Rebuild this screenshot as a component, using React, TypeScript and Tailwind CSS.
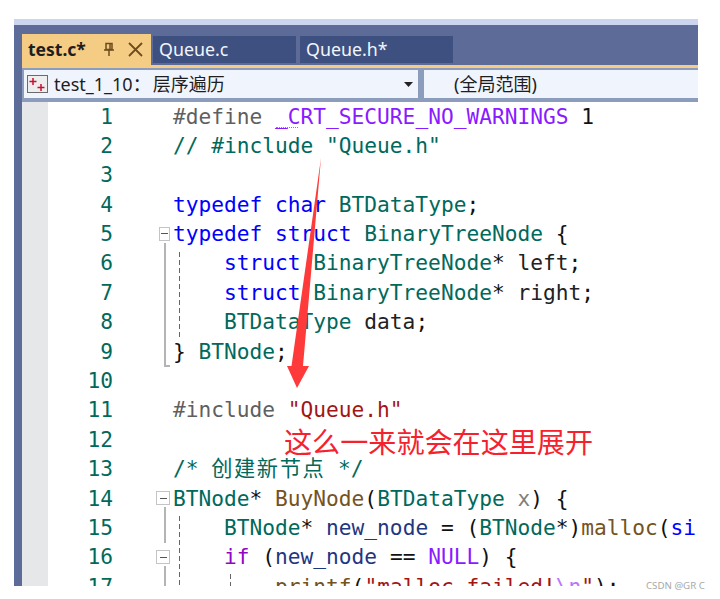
const mono = "font-['DejaVu_Sans_Mono','Noto_Sans_CJK_SC',monospace] text-[21.2px] leading-[29.4px] whitespace-pre";

const kw = "text-[#0000ff]";
const type = "text-[#00695c]";
const pre = "text-[#5f5f5f]";
const macro = "text-[#8a1bff]";
const str = "text-[#a31515]";
const fn = "text-[#74531f]";
const local = "text-[#1f377f]";
const param = "text-[#808080]";
const ctl = "text-[#8f08c4]";

type Seg = [string, string?];

const lines: { segs: Seg[]; fold?: "small" | "big" }[] = [
  { segs: [["#define ", pre], ["_CRT_SECURE_NO_WARNINGS", macro], [" 1"]] },
  { segs: [['// #include "Queue.h"', type]] },
  { segs: [] },
  { segs: [["typedef char", kw], [" BTDataType", type], [";"]] },
  { fold: "small", segs: [["typedef struct", kw], [" BinaryTreeNode", type], [" {"]] },
  { segs: [["    struct", kw], [" BinaryTreeNode", type], ["* "], ["left", "text-[#222222]"], [";"]] },
  { segs: [["    struct", kw], [" BinaryTreeNode", type], ["* "], ["right", "text-[#222222]"], [";"]] },
  { segs: [["    BTDataType", type], [" data", "text-[#222222]"], [";"]] },
  { segs: [["} "], ["BTNode", type], [";"]] },
  { segs: [] },
  { segs: [["#include ", pre], ['"Queue.h"', str]] },
  { segs: [] },
  { segs: [["/* ", type], ["创建新节点", `${type} tracking-[1.6px]`], [" */", type]] },
  { fold: "big", segs: [["BTNode", type], ["* "], ["BuyNode", fn], ["("], ["BTDataType", type], [" "], ["x", param], [") {"]] },
  { segs: [["    "], ["BTNode", type], ["* "], ["new_node", local], [" = ("], ["BTNode", type], ["*)"], ["malloc", fn], ["("], ["sizeof", kw], ["(BTNode));"]] },
  { fold: "big", segs: [["    "], ["if", ctl], [" ("], ["new_node", local], [" == "], ["NULL", macro], [") {"]] },
  { segs: [["        "], ["printf", fn], ["("], ['"malloc failed!', str], ["\\n", "text-[#b776fb]"], ['"', str], [");"]] },
];

const dashed = "absolute w-px bg-[repeating-linear-gradient(to_bottom,#666666_0,#666666_5px,transparent_5px,transparent_8px)]";

function FoldBox({ size }: { size: "small" | "big" }) {
  return (
    <span className={`flex h-[14px] items-center justify-center border border-[#c4c4c4] bg-white ${size === "small" ? "w-[11px]" : "w-[14px]"}`}>
      <span className="h-px w-[7px] bg-[#555555]" />
    </span>
  );
}

function Tab({ label, width }: { label: string; width: string }) {
  return (
    <div className={`flex h-[27px] items-center bg-[#3e5080] pl-[6px] text-[17.8px] text-[#f2f5fc] ${width}`}>
      {label}
    </div>
  );
}

export default function App() {
  return (
    <div className="relative h-[599px] w-[720px] overflow-hidden bg-white pl-[14px] pt-[19px] font-['Noto_Sans','Noto_Sans_CJK_SC',sans-serif]">
      <div className="w-[684px]">
        <div className="h-[6px] bg-[#ccd5f0]" />
        <div className="bg-[#5d6b99] pl-[8px]">
          <div className="flex h-[40px] items-end">
            <div className="flex h-[31px] w-[129px] items-center bg-[#f5cc84] pl-[6px] text-[17.5px] font-bold text-[#1e1e1e]">
              <span>test.c*</span>
              <svg className="ml-[17px]" width="12" height="15" viewBox="0 0 12 15" fill="none" stroke="#6e4c1e" strokeWidth="1.5">
                <path d="M3 1.5h6v6H3z" />
                <path d="M7 2v5.5" />
                <path d="M1 8h10" />
                <path d="M6 8v6" />
              </svg>
              <svg className="ml-[13px]" width="15" height="15" viewBox="0 0 15 15" fill="none" stroke="#6e4c1e" strokeWidth="1.8">
                <path d="M1 1l13 13M14 1L1 14" />
              </svg>
            </div>
            <div className="flex items-center gap-[4px] self-end pb-[2px] pl-[2px]">
              <Tab label="Queue.c" width="w-[143px]" />
              <Tab label="Queue.h*" width="w-[153px]" />
            </div>
          </div>
          <div className="h-[3px] bg-[#f5cc84]" />
          <div className="flex h-[34px] bg-[#8b9cbd]">
            <div className="ml-[2px] mt-[2px] flex h-[28px] w-[394px] items-center bg-[#f0f4fd] pl-[3px] text-[17.5px] text-[#1e1e1e]">
              <svg width="21" height="18" viewBox="0 0 21 18" fill="none">
                <rect x="0.5" y="0.5" width="20" height="17" fill="#eeeeee" stroke="#6b6b6b" />
                <path d="M6 3v7M2.5 6.5h7M14 9v7M10.5 12.5h7" stroke="#c8102e" strokeWidth="1.5" />
              </svg>
              <span className="ml-[6px] whitespace-pre text-[18px]">test_1_10：<span className="ml-[2px]">层序遍历</span></span>
              <svg className="ml-auto mr-[5px]" width="9" height="5" viewBox="0 0 9 5">
                <path d="M0 0h9L4.5 5z" fill="#222222" />
              </svg>
            </div>
            <div className="ml-[6px] mt-[2px] flex h-[28px] flex-1 items-center bg-[#f0f4fd] pl-[30px] text-[18px] text-[#1e1e1e]">
              (全局范围)
            </div>
          </div>
          <div className="relative flex h-[484px] overflow-hidden bg-white">
            <div className="w-[26px] shrink-0 bg-[#e6e7e8]" />
            <div className="-mt-[0.5px] min-w-0 flex-1">
              {lines.map((line, i) => (
                <div key={i} className={`flex h-[29.4px] items-center ${mono}`}>
                  <span className="w-[65px] shrink-0 text-right text-[#00695c]">{i + 1}</span>
                  <span className="flex w-[60px] shrink-0 justify-end pr-[3px]">
                    {line.fold && <FoldBox size={line.fold} />}
                  </span>
                  <span className="text-[#111111]">
                    {line.segs.map(([t, c], j) => (
                      <span key={j} className={c}>{t}</span>
                    ))}
                  </span>
                </div>
              ))}
            </div>
            {/* fold guides and squiggle drawn over the code */}
            <div className="absolute left-[254px] top-[25px] w-[22px] border-t border-dotted border-[#888888]" />
            <div className="absolute left-[142px] top-[141px] h-[124px] w-[6px] border-b-2 border-l-2 border-[#b4b4b4]" />
            <div className={`${dashed} left-[157px] top-[150px] h-[86px]`} />
            <div className="absolute left-[142px] top-[405px] h-[36px] border-l-2 border-[#b4b4b4]" />
            <div className="absolute left-[142px] top-[464px] h-[20px] border-l-2 border-[#b4b4b4]" />
            <div className={`${dashed} left-[157px] top-[414px] h-[70px]`} />
            <div className={`${dashed} left-[208px] top-[472px] h-[12px]`} />
          </div>
        </div>
      </div>
      <svg className="absolute left-[280px] top-[150px]" width="50" height="245" viewBox="280 150 50 245">
        <path d="M321 158L303 366H309L297 388L287 366H291.5z" fill="#ff3a3a" />
      </svg>
      <div className="absolute left-[284px] top-[422px] font-['Noto_Sans_CJK_SC',sans-serif] text-[28.1px] leading-[38px] text-[#f5222d]">
        这么一来就会在这里展开
      </div>
      <div className="absolute left-[646px] top-[579px] text-[9.7px] leading-[13px] text-[#a8a8a8]">CSDN @GR C</div>
    </div>
  );
}
